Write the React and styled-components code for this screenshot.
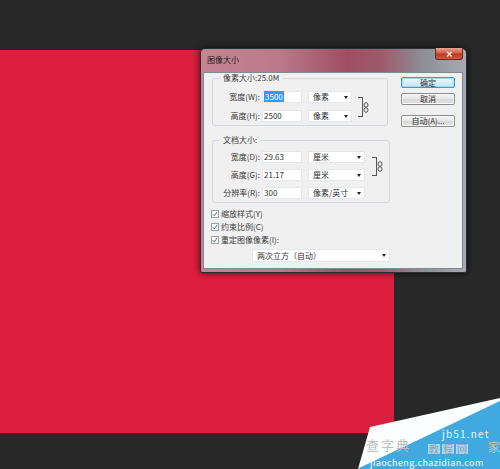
import React from 'react'
import styled, { createGlobalStyle } from 'styled-components'

const Global = createGlobalStyle`
  body {
    margin: 0;
    background: #282828;
    font-family: "Noto Sans CJK SC", "Liberation Sans", sans-serif;
  }
`

const Workspace = styled.div`
  position: relative;
  width: 500px;
  height: 469px;
  overflow: hidden;
  box-sizing: border-box;
  padding-top: 50px;
  background: #282828;
`

const Canvas = styled.div`
  width: 394px;
  height: 383px;
  background: #dc1f3f;
`

const Dialog = styled.div`
  position: absolute;
  left: 200px;
  top: 48px;
  width: 267px;
  height: 225px;
  box-sizing: border-box;
  display: flex;
  flex-direction: column;
  padding: 0 3px 3px 2px;
  border: 1px solid #2b2e33;
  border-radius: 5px 5px 2px 2px;
  background: linear-gradient(to right, #c68593 0%, #b9798a 30%, #a04d63 55%, #9e5a6c 68%, #8c8f96 84%, #a5abb1 100%);
  box-shadow: 0 0 7px rgba(0, 0, 0, 0.7);
`

const TitleBar = styled.div`
  height: 23px;
  display: flex;
  align-items: flex-start;
  justify-content: space-between;
`

const Title = styled.span`
  margin: 6px 0 0 4px;
  font-size: 8px;
  line-height: 10px;
  color: #1c1c1c;
`

const CloseButton = styled.div`
  width: 28px;
  height: 12px;
  margin-top: -1px;
  border: 1px solid #6b2a22;
  border-top: none;
  border-radius: 0 0 3px 3px;
  background: linear-gradient(#e6a594 0%, #d5614b 45%, #c2361f 55%, #cf5a3f 100%);
  color: #fff;
  font-size: 8px;
  font-weight: bold;
  line-height: 12px;
  text-align: center;
  box-sizing: border-box;
`

const Client = styled.div`
  flex: 1;
  display: flex;
  gap: 11px;
  padding: 0 0 0 8px;
  background: #f0f0f0;
  border: 1px solid #7f8a95;
  font-size: 8px;
  color: #3a3a3a;
`

const LeftColumn = styled.div`
  width: 178px;
  display: flex;
  flex-direction: column;
`

const Group = styled.fieldset`
  margin: ${p => p.$top}px 0 0 0;
  width: ${p => p.$width}px;
  box-sizing: border-box;
  padding: ${p => p.$padTop}px 0 3px 0;
  border: 1px solid #d3d9de;
  border-radius: 3px;
  min-width: 0;
`

const Legend = styled.legend`
  margin-left: 7px;
  padding: 0 3px;
  font-size: 8px;
  line-height: 10px;
  color: #3a3a3a;
`

const Linked = styled.div`
  display: flex;
  align-items: stretch;
`

const Rows = styled.div`
  display: flex;
  flex-direction: column;
  gap: ${p => p.$gap}px;
`

const Row = styled.div`
  display: flex;
  align-items: center;
  height: 12px;
`

const Label = styled.span`
  width: 47px;
  margin-right: 2px;
  text-align: right;
  line-height: 12px;
  white-space: nowrap;
`

const Input = styled.div`
  width: 40px;
  height: 12px;
  box-sizing: border-box;
  padding-left: 1px;
  background: #fff;
  border: 1px solid #e4e8ec;
  line-height: 10px;
  color: #333;
`

const Selected = styled.span`
  background: #3399ff;
  color: #fff;
  padding: 0 1px;
`

const Select = styled.div`
  width: ${p => p.$width}px;
  height: ${p => p.$height || 12}px;
  margin-left: ${p => p.$left || 6}px;
  box-sizing: border-box;
  display: flex;
  align-items: center;
  justify-content: space-between;
  padding: 0 3px 0 4px;
  background: #fff;
  border: 1px solid #e4e8ec;
  line-height: 10px;
  color: #333;
`

const Arrow = styled.span`
  width: 0;
  height: 0;
  border-left: 2px solid transparent;
  border-right: 2px solid transparent;
  border-top: 3px solid #222;
`

const LinkMark = styled.div`
  display: flex;
  align-items: center;
  margin-left: ${p => p.$left}px;
  padding: 6px 0 5px;
`

const Bracket = styled.div`
  width: 5px;
  height: 100%;
  box-sizing: border-box;
  border: 1px solid #555;
  border-left: none;
`

const CheckList = styled.div`
  display: flex;
  flex-direction: column;
  gap: 1px;
  margin: 5px 0 0 -1px;
`

const CheckRow = styled.div`
  display: flex;
  align-items: center;
  gap: 2px;
  height: 12px;
  line-height: 12px;
`

const Box = styled.span`
  width: 8px;
  height: 8px;
  box-sizing: border-box;
  background: #fff;
  border: 1px solid #9aa3ab;
  display: flex;
  align-items: center;
  justify-content: center;
`

const RightColumn = styled.div`
  width: 54px;
  display: flex;
  flex-direction: column;
  padding-top: 4px;
`

const Button = styled.div`
  height: ${p => p.$h}px;
  margin-top: ${p => p.$top}px;
  box-sizing: border-box;
  border: 1px solid ${p => (p.$primary ? '#3c9bd6' : '#8c8c8c')};
  border-radius: 2px;
  background: ${p =>
    p.$primary
      ? 'linear-gradient(#eaf6fd, #c4e5f6)'
      : 'linear-gradient(#f4f4f4 0%, #e6e6e6 50%, #d8d8d8 51%, #e2e2e2 100%)'};
  box-shadow: ${p => (p.$primary ? 'inset 0 0 0 1px #9edcf5' : 'inset 0 0 0 1px #fbfbfb')};
  text-align: center;
  font-size: 8px;
  line-height: ${p => p.$h - 2}px;
  color: #333;
`

const Watermark = styled.div`
  position: absolute;
  left: 350px;
  top: 395px;
  width: 150px;
  height: 74px;
  font-family: "Noto Sans CJK SC", sans-serif;
`

const Shape = styled.svg`
  position: absolute;
  inset: 0;
`

const MarkText = styled.span`
  position: absolute;
  left: ${p => p.$x}px;
  top: ${p => p.$y}px;
  font-size: ${p => p.$size}px;
  line-height: 1;
  color: ${p => p.$color};
  letter-spacing: ${p => p.$spacing || 0}px;
  white-space: nowrap;
`

const Tile = styled.span`
  display: inline-block;
  padding: 0 1px;
  margin-right: 2px;
  background: rgba(255, 255, 255, 0.55);
`

function Chain() {
  return (
    <svg width="6" height="11" viewBox="0 0 6 11">
      <ellipse cx="3" cy="3" rx="2" ry="2.3" fill="none" stroke="#555" strokeWidth="1" />
      <ellipse cx="3" cy="8" rx="2" ry="2.3" fill="none" stroke="#555" strokeWidth="1" />
    </svg>
  )
}

function Check({ label }) {
  return (
    <CheckRow>
      <Box>
        <svg width="6" height="6" viewBox="0 0 6 6">
          <path d="M0.8 3.2 L2.3 4.8 L5.2 0.9" fill="none" stroke="#4a6b8a" strokeWidth="1" />
        </svg>
      </Box>
      <span>{label}</span>
    </CheckRow>
  )
}

function Field({ label, value, unit, unitWidth, selected }) {
  return (
    <Row>
      <Label>{label}</Label>
      <Input>{selected ? <Selected>{value}</Selected> : value}</Input>
      <Select $width={unitWidth}>
        <span>{unit}</span>
        <Arrow />
      </Select>
    </Row>
  )
}

export default function App() {
  return (
    <Workspace>
      <Global />
      <Canvas />

      <Dialog>
        <TitleBar>
          <Title>图像大小</Title>
          <CloseButton>✕</CloseButton>
        </TitleBar>
        <Client>
          <LeftColumn>
            <Group $top={0} $width={176} $padTop={8}>
              <Legend>像素大小:25.0M</Legend>
              <Linked>
                <Rows $gap={7}>
                  <Field label="宽度(W):" value="3500" unit="像素" unitWidth={44} selected />
                  <Field label="高度(H):" value="2500" unit="像素" unitWidth={44} />
                </Rows>
                <LinkMark $left={6}>
                  <Bracket />
                  <Chain />
                </LinkMark>
              </Linked>
            </Group>

            <Group $top={9} $width={178} $padTop={6}>
              <Legend>文档大小:</Legend>
              <Rows $gap={6}>
                <Linked>
                  <Rows $gap={6}>
                    <Field label="宽度(D):" value="29.63" unit="厘米" unitWidth={57} />
                    <Field label="高度(G):" value="21.17" unit="厘米" unitWidth={57} />
                  </Rows>
                  <LinkMark $left={7}>
                    <Bracket />
                    <Chain />
                  </LinkMark>
                </Linked>
                <Field label="分辨率(R):" value="300" unit="像素/英寸" unitWidth={57} />
              </Rows>
            </Group>

            <CheckList>
              <Check label="缩放样式(Y)" />
              <Check label="约束比例(C)" />
              <Check label="重定图像像素(I):" />
            </CheckList>

            <Select $width={138} $height={13} $left={40} style={{ marginTop: 3 }}>
              <span>两次立方（自动）</span>
              <Arrow />
            </Select>
          </LeftColumn>

          <RightColumn>
            <Button $primary $h={11} $top={0}>确定</Button>
            <Button $h={12} $top={5}>取消</Button>
            <Button $h={12} $top={10}>自动(A)...</Button>
          </RightColumn>
        </Client>
      </Dialog>

      <Watermark>
        <Shape width="150" height="74" viewBox="0 0 150 74">
          <polygon points="20,32 150,3 150,74 8,74" fill="#fbfdfe" />
          <polygon points="150,6 150,74 7,74" fill="#3fa9e0" />
        </Shape>
        <MarkText $x={92} $y={34} $size={10} $color="#e9f4fb" $spacing={1.2}>jb51.net</MarkText>
        <MarkText $x={16} $y={43} $size={13} $color="#bdbdbd" $spacing={2}>查字典</MarkText>
        <MarkText $x={78} $y={49} $size={10} $color="#8fa3b0">
          <Tile>教</Tile>
          <Tile>程</Tile>
          <Tile>网</Tile>
        </MarkText>
        <MarkText $x={138} $y={46} $size={12} $color="#b9c9d3">家</MarkText>
        <MarkText $x={20} $y={63} $size={9} $color="#ffffff" $spacing={0.4}>jiaocheng.chazidian.com</MarkText>
      </Watermark>
    </Workspace>
  )
}
